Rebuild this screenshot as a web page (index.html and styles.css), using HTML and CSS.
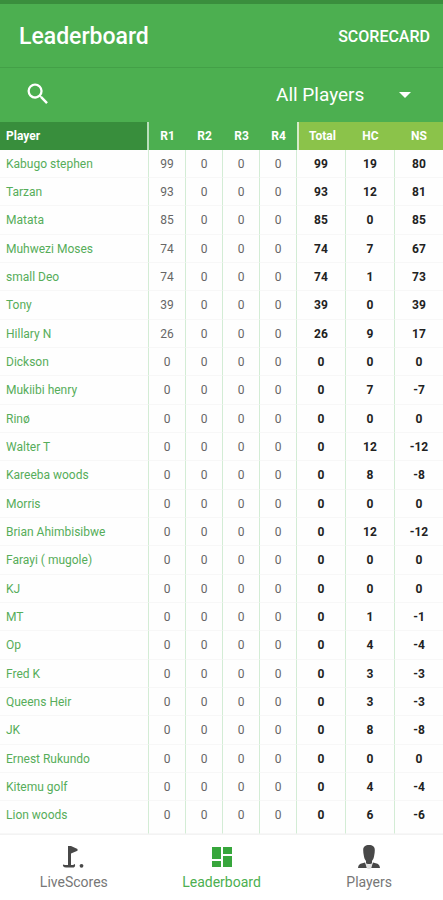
FILE: index.html
```html
<!DOCTYPE html>
<html lang="en">
<head>
    <meta charset="UTF-8">
    <meta name="viewport" content="width=device-width, initial-scale=1.0">
    <title>Leaderboard</title>
    <link rel="stylesheet" href="styles.css">
</head>
<body>
    <header class="topbar">
        <h1>Leaderboard</h1>
        <button type="button" class="scorecard">SCORECARD</button>
    </header>

    <div class="filters">
        <button type="button" class="search" aria-label="Search players">
            <svg width="28" height="28" viewBox="0 0 24 24" fill="currentColor"><path d="M15.5 14h-.79l-.28-.27A6.47 6.47 0 0 0 16 9.5 6.5 6.5 0 1 0 9.5 16c1.61 0 3.09-.59 4.23-1.57l.27.28v.79l5 4.99L20.49 19l-4.99-5zm-6 0C7.01 14 5 11.99 5 9.5S7.01 5 9.5 5 14 7.01 14 9.5 11.99 14 9.5 14z"/></svg>
        </button>
        <div class="picker">
            <select aria-label="Player filter">
                <option>All Players</option>
            </select>
            <svg class="arrow" width="12" height="6" viewBox="0 0 12 6"><path d="M0 0h12L6 6z" fill="currentColor"/></svg>
        </div>
    </div>

    <main>
        <table class="board">
            <thead>
                <tr>
                    <th class="player">Player</th>
                    <th class="round">R1</th>
                    <th class="round">R2</th>
                    <th class="round">R3</th>
                    <th class="round">R4</th>
                    <th class="sum total">Total</th>
                    <th class="sum">HC</th>
                    <th class="sum net">NS</th>
                </tr>
            </thead>
            <tbody id="scores"></tbody>
        </table>
    </main>

    <nav class="tabs">
        <a href="#livescores">
            <svg width="24" height="24" viewBox="0 0 24 24" fill="currentColor"><path d="M6 1h3l6.500 3v1.800L9 8.500V20h2.200l1.300-1c1 .3 1 3.600-1.500 3.600H4C1.500 22.600.5 21 1 19.500L3 20h3z"/><circle cx="19.500" cy="20.800" r="1.900"/></svg>
            <span>LiveScores</span>
        </a>
        <a href="#leaderboard" class="active">
            <svg width="24" height="24" viewBox="0 0 24 24" fill="currentColor"><path d="M2 2h9v12H2zM2 16h9v6H2zM13 2h9v7h-9zM13 11h9v11h-9z"/></svg>
            <span>Leaderboard</span>
        </a>
        <a href="#players">
            <svg width="24" height="24" viewBox="0 0 24 24" fill="currentColor"><path d="M12 0c3.600 0 5.800 1.500 5.800 5 0 2-.2 3.500-.6 5.500-.4 2.500-1 4-2.200 5.500V19H9v-3c-1.200-1.500-1.800-3-2.200-5.500C6.400 8.500 6.200 7 6.200 5c0-3.500 2.200-5 5.800-5z"/><path d="M8 17.500l-4.500 1.300C2 19.500 1.300 21 1 23h10zM16 17.500l4.500 1.300C22 19.500 22.700 21 23 23H13z"/><path d="M8.300 18l1.200 4.500c1 2 4 2 5 0L15.700 18 12 19.500z" fill="#e2e2e2"/></svg>
            <span>Players</span>
        </a>
    </nav>

    <script>
        // name, R1, R2, R3, R4, total, handicap, net score
        const players = [
            ["Kabugo stephen", 99, 0, 0, 0, 99, 19, 80],
            ["Tarzan", 93, 0, 0, 0, 93, 12, 81],
            ["Matata", 85, 0, 0, 0, 85, 0, 85],
            ["Muhwezi Moses", 74, 0, 0, 0, 74, 7, 67],
            ["small Deo", 74, 0, 0, 0, 74, 1, 73],
            ["Tony", 39, 0, 0, 0, 39, 0, 39],
            ["Hillary N", 26, 0, 0, 0, 26, 9, 17],
            ["Dickson", 0, 0, 0, 0, 0, 0, 0],
            ["Mukiibi henry", 0, 0, 0, 0, 0, 7, -7],
            ["Rinø", 0, 0, 0, 0, 0, 0, 0],
            ["Walter T", 0, 0, 0, 0, 0, 12, -12],
            ["Kareeba woods", 0, 0, 0, 0, 0, 8, -8],
            ["Morris", 0, 0, 0, 0, 0, 0, 0],
            ["Brian Ahimbisibwe", 0, 0, 0, 0, 0, 12, -12],
            ["Farayi ( mugole)", 0, 0, 0, 0, 0, 0, 0],
            ["KJ", 0, 0, 0, 0, 0, 0, 0],
            ["MT", 0, 0, 0, 0, 0, 1, -1],
            ["Op", 0, 0, 0, 0, 0, 4, -4],
            ["Fred K", 0, 0, 0, 0, 0, 3, -3],
            ["Queens Heir", 0, 0, 0, 0, 0, 3, -3],
            ["JK", 0, 0, 0, 0, 0, 8, -8],
            ["Ernest Rukundo", 0, 0, 0, 0, 0, 0, 0],
            ["Kitemu golf", 0, 0, 0, 0, 0, 4, -4],
            ["Lion woods", 0, 0, 0, 0, 0, 6, -6]
        ];

        const body = document.getElementById("scores");
        players.forEach(player => {
            const row = body.insertRow();
            player.forEach((value, i) => {
                const cell = row.insertCell();
                cell.textContent = value;
                cell.className = i === 0 ? "player" : i < 5 ? "round" : "sum";
            });
        });
    </script>
</body>
</html>
```
FILE: styles.css
```css
* { box-sizing: border-box; }
body {
    margin: 0;
    min-height: 100vh;
    display: flex;
    flex-direction: column;
    font-family: Roboto, "Liberation Sans", sans-serif;
    background: #fefefe;
}
button, select { font-family: inherit; color: inherit; background: none; border: none; padding: 0; cursor: pointer; }
svg { display: block; }

.topbar {
    display: flex;
    align-items: center;
    justify-content: space-between;
    height: 68px;
    padding: 2px 13px 0 19px;
    border-top: 4px solid #3a8e3d;
    border-bottom: 1px solid #43a047;
    background: #4caf50;
    color: #fff;
}
.topbar h1 { margin: 0; font-size: 23px; font-weight: 500; }
.scorecard { font-size: 16px; font-weight: 500; }

.filters {
    display: flex;
    align-items: center;
    justify-content: space-between;
    height: 54px;
    padding: 0 32px 2px 24px;
    background: #4caf50;
    color: #fff;
}
.picker { position: relative; }
.picker select { appearance: none; width: 135px; font-size: 19px; }
.picker option { color: #333; }
.arrow { position: absolute; right: 0; top: 9px; pointer-events: none; }

main { flex: 1; }
.board { width: 100%; table-layout: fixed; border-collapse: separate; border-spacing: 0; font-size: 12px; }
.board th { height: 28px; padding: 0; color: #fff; font-weight: 700; background: #4caf50; }
.board td { height: 28px; padding: 0; text-align: center; border-right: 1px solid #d3ecd5; border-bottom: 1px solid #f7f7f7; }
.board tr:nth-child(3n) td { height: 29px; }
.board tr:last-child td { height: 33px; padding-bottom: 4px; }
.board td:last-child { border-right: none; }
.board th.player, .board td.player { padding-left: 6px; text-align: left; }
.board th.player { background: #388e3c; border-right: 2px solid #b9dfbb; }
.board th.round { width: 37px; }
.board th.sum { width: 49px; background: #8bc34a; }
.board th.total { border-left: 2px solid #d5ebc9; }
.board th.net { width: 48px; }
.board td.player { color: #56ad5a; }
.board td.round { color: #666; }
.board td.sum { color: #222; font-weight: 700; }

.tabs { display: flex; height: 67px; border-top: 1px solid #f3f3f3; background: #fff; }
.tabs a {
    flex: 1;
    display: flex;
    flex-direction: column;
    align-items: center;
    gap: 4px;
    padding-top: 10px;
    font-size: 14px;
    line-height: 18px;
    color: #777;
    text-decoration: none;
}
.tabs svg { color: #484848; }
.tabs .active { color: #4caf50; }
.tabs .active svg { color: #37a63c; }
```
